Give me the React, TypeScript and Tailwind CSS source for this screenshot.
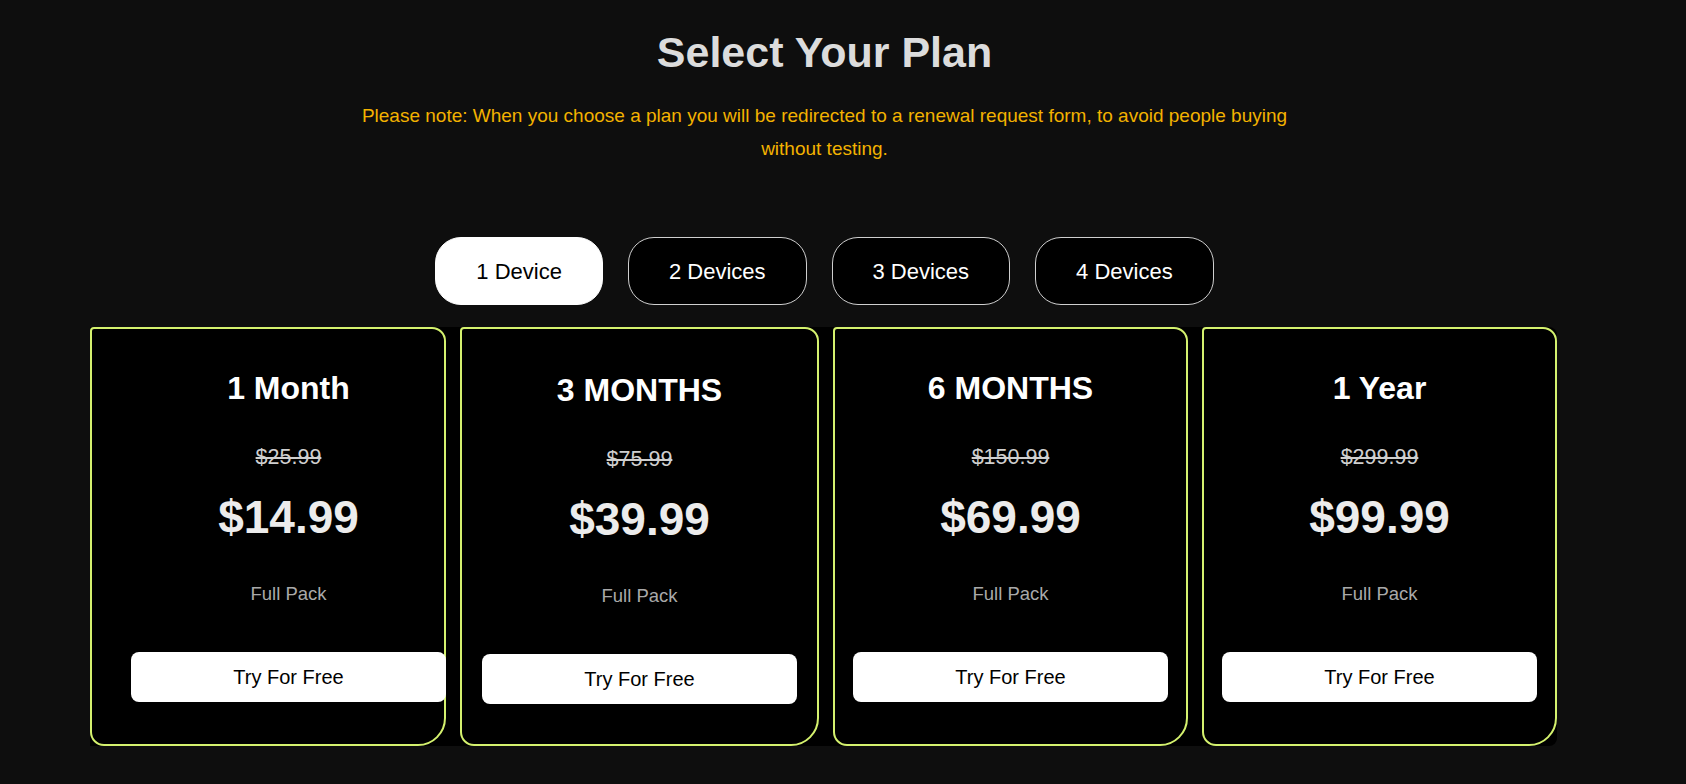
import React from "react";

const plans = [
  { title: "1 Month", old: "$25.99", price: "$14.99", w: "w-[356px]", inner: "pl-[41px]", shift: "pt-[39px]" },
  { title: "3 MONTHS", old: "$75.99", price: "$39.99", w: "w-[359px]", inner: "", shift: "pt-[41px]" },
  { title: "6 MONTHS", old: "$150.99", price: "$69.99", w: "w-[355px]", inner: "", shift: "pt-[39px]" },
  { title: "1 Year", old: "$299.99", price: "$99.99", w: "w-[355px]", inner: "", shift: "pt-[39px]" },
];

const devices = ["1 Device", "2 Devices", "3 Devices", "4 Devices"];

export default function App() {
  return (
    <div
      className="min-h-[784px] w-full bg-[#0e0e0e]"
      style={{ fontFamily: '"Liberation Sans", Arial, sans-serif' }}
    >
      <div className="flex w-[1649px] flex-col items-center">
        <h1 className="mt-[27px] h-[50px] text-[43px] font-bold leading-[50px] text-[#dcdcdc]">
          Select Your Plan
        </h1>
        <p className="mt-[22px] w-[960px] text-center text-[19px] leading-[33px] text-[#f3b200]">
          Please note: When you choose a plan you will be redirected to a renewal request form, to avoid people buying without testing.
        </p>
        <div className="mt-[72px] flex gap-[25px]">
          {devices.map((d, i) => (
            <button
              key={d}
              className={
                i === 0
                  ? "h-[68px] rounded-[26px] border border-white bg-white px-[40px] text-[22px] text-black"
                  : "h-[68px] rounded-[26px] border border-[#cfcfcf] bg-black px-[40px] text-[22px] text-white"
              }
            >
              {d}
            </button>
          ))}
        </div>
        <div className="mt-[22px] flex gap-[14px] self-start ml-[90px] rounded-r-[8px] bg-black">
          {plans.map((p) => (
            <div
              key={p.title}
              className={`${p.w} h-[419px] rounded-tl-[4px] rounded-tr-[14px] rounded-bl-[14px] rounded-br-[28px] border-2 border-[#d4f16e] bg-black`}
            >
              <div className={`flex flex-col items-center ${p.inner} ${p.shift}`}>
                <div className="h-[40px] text-[32px] font-bold leading-[40px] text-white">{p.title}</div>
                <div className="mt-[34px] h-[30px] text-[21.5px] leading-[30px] text-[#cfcfcf] line-through">
                  {p.old}
                </div>
                <div className="mt-[18px] h-[54px] text-[46px] font-bold leading-[54px] text-[#ececec]">
                  {p.price}
                </div>
                <div className="mt-[38px] h-[24px] text-[18.5px] leading-[24px] text-[#a9a9a9]">Full Pack</div>
                <button className="mt-[46px] h-[50px] w-[315px] shrink-0 rounded-[8px] bg-white text-[20px] text-black">
                  Try For Free
                </button>
              </div>
            </div>
          ))}
        </div>
      </div>
    </div>
  );
}
